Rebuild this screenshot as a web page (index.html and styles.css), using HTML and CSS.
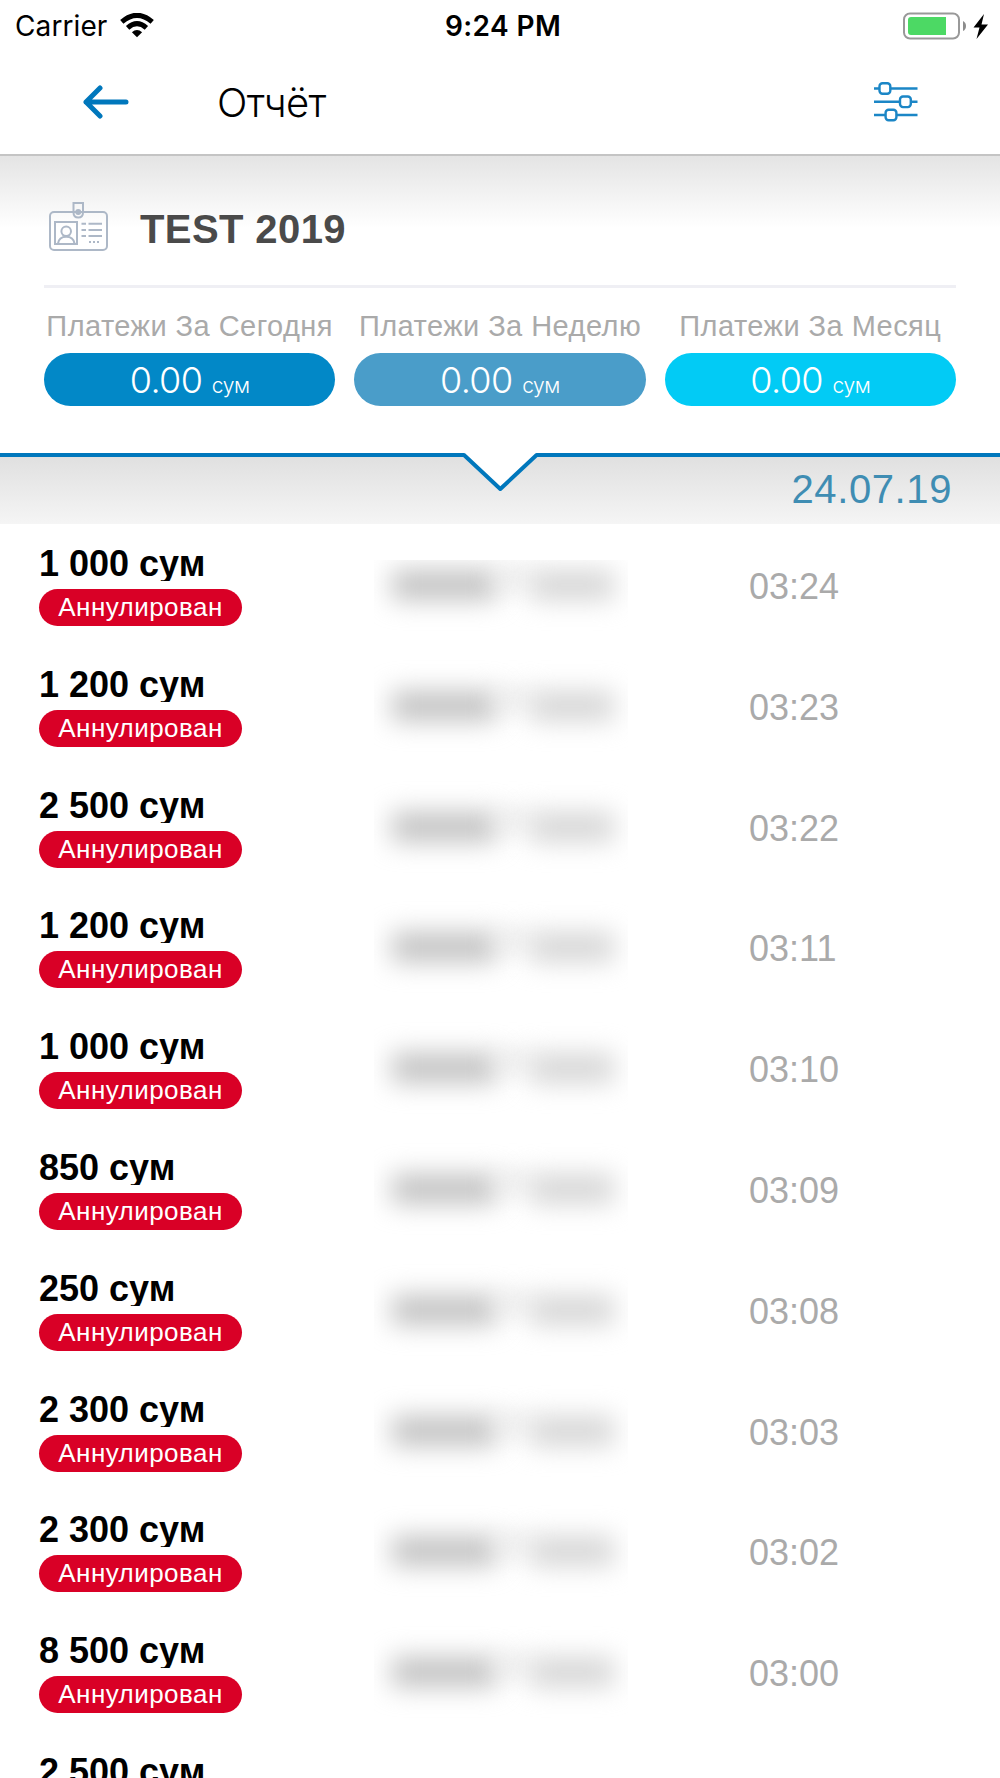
FILE: index.html
```html
<!DOCTYPE html>
<html lang="ru">
<head>
<meta charset="utf-8">
<title>Отчёт</title>
<link rel="stylesheet" href="styles.css">
</head>
<body>
<div class="screen">
  <header class="top">
    <div class="status">
      <div class="status-left">
        <span class="carrier">Carrier</span>
        <svg class="wifi" width="34" height="25" viewBox="0 0 34 25">
          <path d="M17 24.2 L11.9 19.2 Q17 14.6 22.1 19.2 Z"/>
          <path class="arc" d="M7.6 14.9 Q17 6.5 26.4 14.9"/>
          <path class="arc" d="M1.8 8.9 Q17 -4.300 32.200 8.900"/>
        </svg>
      </div>
      <span class="clock">9:24 PM</span>
      <svg class="battery" width="86" height="28" viewBox="0 0 86 28">
        <rect x="1" y="1.500" width="55" height="25" rx="6" fill="none" stroke="#999" stroke-width="2"/>
        <path d="M8 5 H43 V23 H8 Q5 23 5 20 V8 Q5 5 8 5 Z" fill="#4cd964"/>
        <path d="M60 9 Q63 10.500 63 14 Q63 17.500 60 19 Z" fill="#8c8c8c"/>
        <path d="M81 2 L70.500 15.500 H76.500 L73.500 27 L85 12.500 H78.500 Z" fill="#000"/>
      </svg>
    </div>
    <nav class="nav">
      <svg class="back" width="46" height="34" viewBox="0 0 46 34">
        <path d="M43 17 H3 M17 3 L3 17 L17 31"/>
      </svg>
      <h1 class="title">Отчёт</h1>
      <svg class="filters" width="44" height="40" viewBox="0 0 44 40">
        <path d="M0 6.500 H5.500 M16.500 6.500 H43.500 M0 19.800 H26 M37 19.800 H43.500 M0 33 H11.500 M22.500 33 H43.500"/>
        <rect x="5.500" y="1.200" width="10.800" height="10.600" rx="3"/>
        <rect x="26" y="14.500" width="10.800" height="10.600" rx="3"/>
        <rect x="11.600" y="27.700" width="10.800" height="10.600" rx="3"/>
      </svg>
    </nav>
  </header>

  <section class="summary">
    <div class="account">
      <svg class="badge-icon" width="60" height="50" viewBox="0 0 60 50">
        <rect x="1" y="10" width="57" height="38" rx="4"/>
        <path d="M24.500 1 H34 V10.500 Q34 15.500 29.250 15.500 Q24.500 15.500 24.500 10.500 Z"/>
        <circle cx="29.250" cy="10" r="2"/>
        <rect x="6" y="20" width="22" height="22"/>
        <circle cx="17.200" cy="29.300" r="4.800"/>
        <path d="M9 41.500 Q10 34.700 17.200 34.700 Q24.500 34.700 25.500 41.500"/>
        <path d="M32.500 21.800 H37 M39.500 21.800 H53 M32.500 28 H37 M39.500 28 H53 M32.500 34 H37 M39.500 34 H53"/>
        <path d="M40 40 H50" stroke-dasharray="2 2"/>
      </svg>
      <h2 class="account-name">TEST 2019</h2>
    </div>
    <div class="totals">
      <div class="total"><span class="total-label">Платежи За Сегодня</span><div class="pill day">0.00 <small>сум</small></div></div>
      <div class="total"><span class="total-label">Платежи За Неделю</span><div class="pill week">0.00 <small>сум</small></div></div>
      <div class="total"><span class="total-label">Платежи За Месяц</span><div class="pill month">0.00 <small>сум</small></div></div>
    </div>
  </section>

  <div class="date-bar">
    <svg class="notch" width="80" height="40" viewBox="0 0 80 40">
      <path d="M0 0 H80 V2 H76.500 L40.300 36 L3.500 2 H0 Z" fill="#fff" stroke="none"/>
      <path d="M0 2 H4 L40.300 36 L76.600 2 H80"/>
    </svg>
    <span class="date">24.07.19</span>
  </div>

  <main class="list">
    <div class="row"><div class="pay"><span class="amount">1 000 сум</span><span class="state">Аннулирован</span></div><div class="masked cut"><i class="long"></i><i class="dots"></i><i class="short"></i></div><time>03:24</time></div>
    <div class="row"><div class="pay"><span class="amount">1 200 сум</span><span class="state">Аннулирован</span></div><div class="masked"><i class="long"></i><i class="dots"></i><i class="short"></i></div><time>03:23</time></div>
    <div class="row"><div class="pay"><span class="amount">2 500 сум</span><span class="state">Аннулирован</span></div><div class="masked"><i class="long"></i><i class="dots"></i><i class="short"></i></div><time>03:22</time></div>
    <div class="row"><div class="pay"><span class="amount">1 200 сум</span><span class="state">Аннулирован</span></div><div class="masked"><i class="long"></i><i class="dots"></i><i class="short"></i></div><time>03:11</time></div>
    <div class="row"><div class="pay"><span class="amount">1 000 сум</span><span class="state">Аннулирован</span></div><div class="masked"><i class="long"></i><i class="dots"></i><i class="short"></i></div><time>03:10</time></div>
    <div class="row"><div class="pay"><span class="amount">850 сум</span><span class="state">Аннулирован</span></div><div class="masked"><i class="long"></i><i class="dots"></i><i class="short"></i></div><time>03:09</time></div>
    <div class="row"><div class="pay"><span class="amount">250 сум</span><span class="state">Аннулирован</span></div><div class="masked"><i class="long"></i><i class="dots"></i><i class="short"></i></div><time>03:08</time></div>
    <div class="row"><div class="pay"><span class="amount">2 300 сум</span><span class="state">Аннулирован</span></div><div class="masked"><i class="long"></i><i class="dots"></i><i class="short"></i></div><time>03:03</time></div>
    <div class="row"><div class="pay"><span class="amount">2 300 сум</span><span class="state">Аннулирован</span></div><div class="masked"><i class="long"></i><i class="dots"></i><i class="short"></i></div><time>03:02</time></div>
    <div class="row"><div class="pay"><span class="amount">8 500 сум</span><span class="state">Аннулирован</span></div><div class="masked"><i class="long"></i><i class="dots"></i><i class="short"></i></div><time>03:00</time></div>
    <div class="row"><div class="pay"><span class="amount">2 500 сум</span></div></div>
  </main>
</div>
</body>
</html>
```
FILE: styles.css
```css
* { box-sizing: border-box; }
body {
  margin: 0;
  background: #fff;
  font-family: "Liberation Sans", Arial, sans-serif;
}
.screen {
  width: 1000px;
  height: 1778px;
  overflow: hidden;
  display: flex;
  flex-direction: column;
}
h1, h2 { margin: 0; }
svg { display: block; flex: none; }

.top {
  height: 156px;
  flex: none;
  border-bottom: 2px solid #c4c4c4;
  font-family: Inter, sans-serif;
}
.status {
  height: 50px;
  display: grid;
  grid-template-columns: 1fr auto 1fr;
  padding: 0 11px 0 15px;
  align-items: center;
}
.status-left { display: flex; align-items: center; gap: 13px; }
.carrier { font-size: 28px; letter-spacing: 0.1px; line-height: 50px; }
.clock { padding: 1px 0 0 2px; font-size: 28px; font-weight: 600; letter-spacing: 0.4px; line-height: 50px; }
.wifi { fill: #000; }
.wifi .arc { fill: none; stroke: #000; stroke-width: 5; }
.battery { justify-self: end; }
.nav {
  height: 104px;
  display: flex;
  align-items: center;
  padding: 0 82px 0 83px;
}
.back { margin-bottom: 1px; fill: none; stroke: #0077bc; stroke-width: 5; stroke-linecap: round; stroke-linejoin: round; }
.title { margin-left: 88px; padding-top: 2px; font-size: 40px; font-weight: 300; letter-spacing: -0.7px; line-height: 50px; }
.filters { margin: 0 0 1px auto; fill: none; stroke: #1b86c6; stroke-width: 2.4; }

.summary {
  height: 297px;
  flex: none;
  padding: 0 44px;
  background: linear-gradient(#e4e4e4, #fff 72px);
}
.account {
  height: 132px;
  display: flex;
  align-items: center;
  gap: 31px;
  padding: 16px 0 0 5px;
  border-bottom: 3px solid #efeff4;
}
.badge-icon { margin-bottom: 4px; fill: none; stroke: #adb8c7; stroke-width: 2; }
.account-name { font-size: 40px; letter-spacing: 0.4px; line-height: 50px; color: #4a4a4a; }
.totals {
  display: grid;
  grid-template-columns: repeat(3, 1fr);
  gap: 19px;
  padding-top: 20px;
}
.total { display: flex; flex-direction: column; align-items: center; }
.total-label { font-size: 29px; letter-spacing: 0.45px; line-height: 36px; color: #aaa; white-space: nowrap; }
.pill {
  width: 100%;
  height: 53px;
  margin-top: 9px;
  border-radius: 27px;
  color: #fff;
  font: 350 36px/55px Inter, sans-serif;
  letter-spacing: -0.6px;
  text-align: center;
}
.pill small { font-size: 21px; font-weight: 300; letter-spacing: -0.4px; }
.day { background: #0288c7; }
.week { background: #4a9dc9; }
.month { background: #02cbf5; }

.date-bar {
  position: relative;
  height: 71px;
  flex: none;
  border-top: 4px solid #0077bc;
  background: linear-gradient(#e0e0e0, #f5f5f5);
  text-align: right;
  padding: 7px 48px 0 0;
}
.date { font-size: 40px; letter-spacing: 0.6px; line-height: 50px; color: #3f8db3; }
.notch { position: absolute; left: 460px; top: -4px; fill: none; stroke: #0077bc; stroke-width: 4; stroke-linejoin: round; }

.row {
  height: 120.8px;
  display: grid;
  grid-template-columns: 335px 254px 1fr;
  padding-left: 39px;
}
.pay { padding-top: 20px; display: flex; flex-direction: column; align-items: flex-start; }
.amount {
  height: 37px;
  overflow: hidden;
  font-size: 36px;
  font-weight: 700;
  line-height: 39px;
  white-space: nowrap;
}
.state {
  margin-top: 8px;
  width: 203px;
  height: 37px;
  border-radius: 19px;
  background: #d90026;
  color: #fff;
  font-size: 26px;
  letter-spacing: 0.45px;
  line-height: 37px;
  text-align: center;
}
.masked {
  height: 121px;
  display: flex;
  padding: 46px 14px 0 18px;
  clip-path: inset(0);
}
.cut { clip-path: inset(36px 0 0); }
.masked i { display: block; filter: blur(13px); }
.long { width: 104px; height: 30px; background: #c2c2c2; }
.dots { width: 34px; height: 14px; background: #e0e0e0; }
.short { width: 84px; height: 30px; background: #d6d6d6; }
time { padding: 43px 0 0 121px; font-size: 36px; line-height: 40px; color: #aaa; }
```
